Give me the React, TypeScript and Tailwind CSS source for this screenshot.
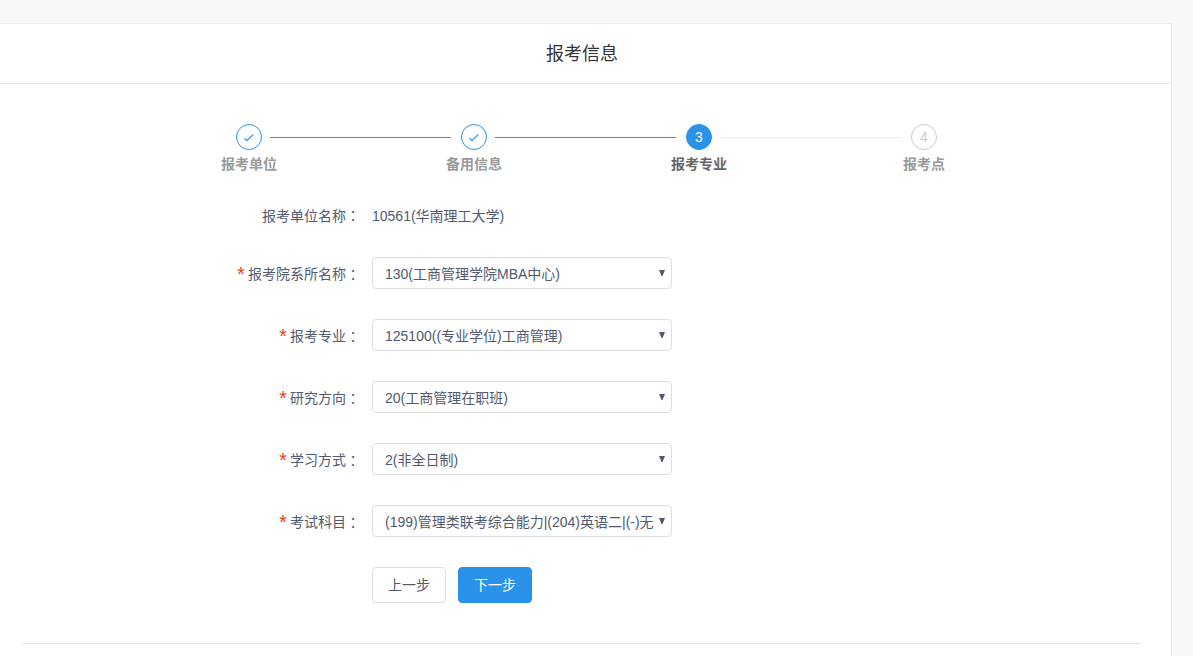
import React, { useState } from 'react';

interface Step {
  title: string;
  status: 'finish' | 'process' | 'wait';
}

interface Field {
  id: string;
  label: string;
  options: string[];
}

const steps: Step[] = [
  { title: '报考单位', status: 'finish' },
  { title: '备用信息', status: 'finish' },
  { title: '报考专业', status: 'process' },
  { title: '报考点', status: 'wait' },
];

const fields: Field[] = [
  { id: 'department', label: '报考院系所名称', options: ['130(工商管理学院MBA中心)'] },
  { id: 'major', label: '报考专业', options: ['125100((专业学位)工商管理)'] },
  { id: 'direction', label: '研究方向', options: ['20(工商管理在职班)'] },
  { id: 'studyMode', label: '学习方式', options: ['2(非全日制)'] },
  { id: 'subjects', label: '考试科目', options: ['(199)管理类联考综合能力|(204)英语二|(-)无'] },
];

const circleStyles = {
  finish: 'border-[#2b92ea] text-[#2b92ea]',
  process: 'border-[#2b92ea] bg-[#2b92ea] text-white',
  wait: 'border-[#cccccc] text-[#cccccc]',
};

const titleStyles = {
  finish: 'text-[#999999]',
  process: 'text-[#666666]',
  wait: 'text-[#999999]',
};

// full-width colon, centred in its cell
function Colon() {
  return <span className="font-['Noto_Sans_CJK_TC',sans-serif]">：</span>;
}

function Steps() {
  return (
    <ol className="ml-[100px] flex w-[701px]">
      {steps.map((step, i) => (
        <React.Fragment key={step.title}>
          <li className="flex w-[26px] flex-col items-center">
            <span
              className={`flex size-[26px] items-center justify-center rounded-full border text-sm leading-none ${circleStyles[step.status]}`}
            >
              {step.status === 'finish' ? (
                <svg width="12" height="12" viewBox="0 0 12 12" fill="none" stroke="currentColor" strokeWidth="1.2">
                  <path d="M1.5 7.2 L4 9.6 L10.3 3.3" />
                </svg>
              ) : (
                i + 1
              )}
            </span>
            <span className={`mt-1 text-sm leading-5 font-bold whitespace-nowrap ${titleStyles[step.status]}`}>
              {step.title}
            </span>
          </li>
          {i < steps.length - 1 && (
            <li
              aria-hidden="true"
              className={`mt-[13px] mr-[10px] ml-2 h-px flex-1 ${step.status === 'finish' ? 'bg-[#2b92ea]' : 'bg-[#e8eaec]'}`}
            />
          )}
        </React.Fragment>
      ))}
    </ol>
  );
}

function SelectField({ field }: { field: Field }) {
  const [value, setValue] = useState(field.options[0]);

  return (
    <div className="flex items-center">
      <label htmlFor={field.id} className="flex h-8 w-[236px] justify-end pt-px pr-3 leading-8">
        <span className="mr-px pt-[3px] font-['Liberation_Mono',monospace] text-xl leading-8 text-[#ed4014]">*</span>
        <span>{field.label}</span>
        <Colon />
      </label>
      <div className="relative w-[300px]">
        <select
          id={field.id}
          value={value}
          onChange={(e) => setValue(e.target.value)}
          className="h-8 w-full appearance-none rounded border border-[#dcdee2] bg-white pt-px pr-4 pl-3"
        >
          {field.options.map((option) => (
            <option key={option} value={option}>{option}</option>
          ))}
        </select>
        <svg
          className="pointer-events-none absolute top-3 right-[7px]"
          width="6"
          height="7"
          viewBox="0 0 6 7"
          fill="currentColor"
        >
          <path d="M0 1h6L3.5 7h-1z" />
        </svg>
      </div>
    </div>
  );
}

export default function App() {
  return (
    <div className="min-h-screen bg-[#f8f8f8] pt-[23px] pr-[21px] font-['Liberation_Sans','Noto_Sans_CJK_SC',sans-serif] text-sm text-[#515a6e]">
      <main className="min-h-[633px] border-t border-r border-[#ececec] bg-white">
        <header className="border-b border-[#e4e4e4] pt-[17px] pr-[7px] pb-[15px] text-center">
          <h1 className="text-lg leading-[27px] font-normal text-[#333333]">报考信息</h1>
        </header>

        <div className="pt-10 pl-px">
          <div className="mx-auto w-[900px] max-w-full">
            <Steps />

            <form className="mt-[25px]" onSubmit={(e) => e.preventDefault()}>
              <div className="flex items-center leading-8">
                <span className="w-[236px] pr-3 text-right">
                  报考单位名称
                  <Colon />
                </span>
                <span>10561(华南理工大学)</span>
              </div>

              <div className="mt-[25px] space-y-[30px]">
                {fields.map((field) => (
                  <SelectField key={field.id} field={field} />
                ))}
              </div>

              <div className="mt-[30px] ml-[236px] flex gap-3">
                <button type="button" className="h-9 rounded border border-[#dcdee2] bg-white px-[15px]">
                  上一步
                </button>
                <button type="submit" className="h-9 rounded border border-[#2b92ea] bg-[#2b92ea] px-[15px] text-white">
                  下一步
                </button>
              </div>
            </form>
          </div>
        </div>

        <hr className="mt-10 mr-[30px] ml-[23px] border-[#e4e4e4]" />
      </main>
    </div>
  );
}
